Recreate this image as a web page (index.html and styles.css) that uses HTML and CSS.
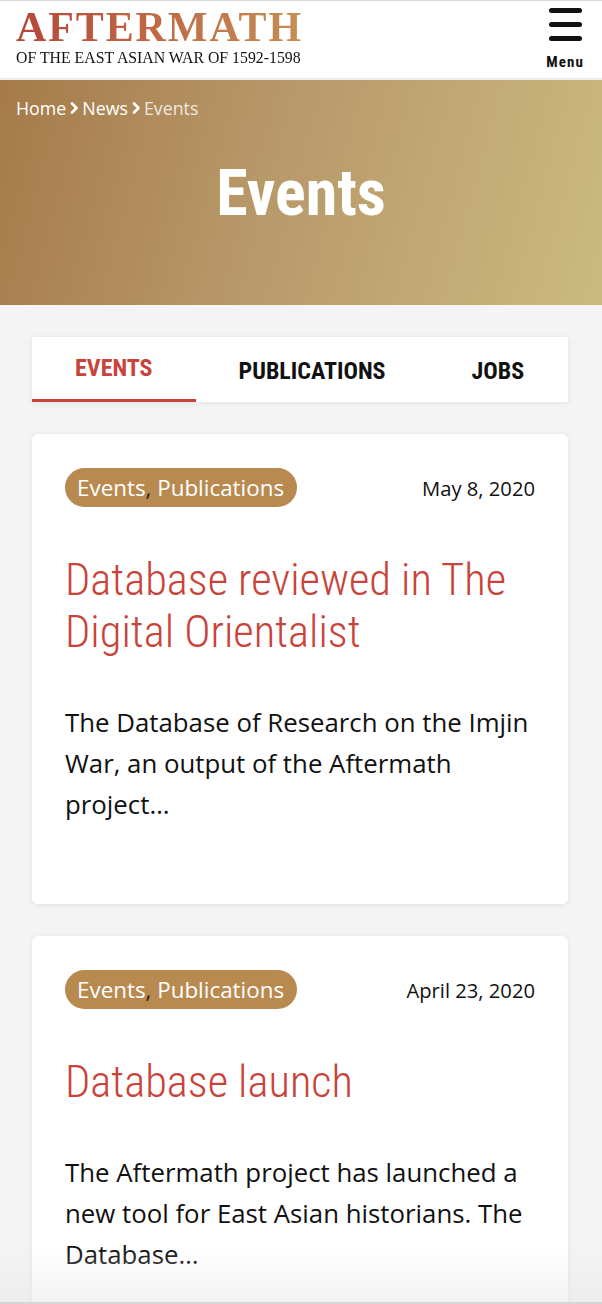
FILE: index.html
```html
<!DOCTYPE html>
<html lang="en">
<head>
<meta charset="utf-8">
<title>Events – Aftermath</title>
<link rel="stylesheet" href="styles.css">
</head>
<body>
<header class="site-header">
  <a class="logo" href="#">
    <span class="logo-title">AFTERMATH</span>
    <span class="logo-sub">OF THE EAST ASIAN WAR OF 1592-1598</span>
  </a>
  <button class="menu-btn" type="button">
    <span class="bars"><i></i><i></i><i></i></span>
    <span class="menu-label">Menu</span>
  </button>
</header>

<section class="hero">
  <nav class="crumbs">
    <a href="#">Home</a>
    <svg class="chev" viewBox="0 0 8 12" width="8" height="12"><path d="M2 1.5 L6.5 6 L2 10.5" fill="none" stroke="#fff" stroke-width="2.6" stroke-linecap="round" stroke-linejoin="round"/></svg>
    <a href="#">News</a>
    <svg class="chev" viewBox="0 0 8 12" width="8" height="12"><path d="M2 1.5 L6.5 6 L2 10.5" fill="none" stroke="#fff" stroke-width="2.6" stroke-linecap="round" stroke-linejoin="round"/></svg>
    <span class="current">Events</span>
  </nav>
  <h1 class="hero-title">Events</h1>
</section>

<main class="content">
  <nav class="tabs">
    <a class="tab active" href="#">EVENTS</a>
    <a class="tab" href="#">PUBLICATIONS</a>
    <a class="tab" href="#">JOBS</a>
  </nav>

  <article class="card">
    <div class="card-meta">
      <span class="pill">Events<span class="comma">,</span> Publications</span>
      <span class="date">May 8, 2020</span>
    </div>
    <h2 class="card-title">Database reviewed in The Digital Orientalist</h2>
    <p class="card-text">The Database of Research on the Imjin War, an output of the Aftermath project…</p>
  </article>

  <article class="card">
    <div class="card-meta">
      <span class="pill">Events<span class="comma">,</span> Publications</span>
      <span class="date">April 23, 2020</span>
    </div>
    <h2 class="card-title">Database launch</h2>
    <p class="card-text">The Aftermath project has launched a new tool for East Asian historians. The Database…</p>
  </article>
</main>
<div class="bottom-fade"></div>
</body>
</html>
```

FILE: styles.css
```css
* { box-sizing: border-box; }
html, body { margin: 0; padding: 0; }
body {
  background: #f4f4f4;
  font-family: "Open Sans", "Noto Sans", sans-serif;
  color: #111;
  overflow: hidden;
}
a { text-decoration: none; color: inherit; }

.site-header {
  height: 80px;
  background: #fff;
  border-top: 1px solid #d8d8d8;
  border-bottom: 2px solid #ececec;
  display: flex;
  justify-content: space-between;
  padding: 5px 18px 0 16px;
}
.logo { display: flex; flex-direction: column; }
.logo-title {
  font-family: "Liberation Serif", "Times New Roman", serif;
  font-weight: bold;
  font-size: 42px;
  line-height: 42px;
  letter-spacing: 1.9px;
  background: linear-gradient(90deg, #b5463a 0%, #bf6a45 50%, #c48f55 100%);
  -webkit-background-clip: text;
  background-clip: text;
  color: transparent;
  width: max-content;
}
.logo-sub {
  font-family: "Liberation Serif", "Times New Roman", serif;
  font-size: 17px;
  line-height: 17px;
  margin-top: 1px;
  color: #111;
  transform: scaleX(0.93);
  transform-origin: left center;
  white-space: nowrap;
  width: max-content;
}
.menu-btn {
  background: none;
  border: 0;
  padding: 0;
  display: flex;
  flex-direction: column;
  align-items: center;
  cursor: pointer;
}
.bars { display: flex; flex-direction: column; gap: 9.5px; padding-top: 2px; }
.bars i { display: block; width: 33px; height: 4.5px; background: #111; border-radius: 3px; }
.menu-label {
  font-family: "Roboto Condensed", "Roboto", sans-serif;
  font-stretch: condensed;
  font-weight: 700;
  font-size: 15px;
  color: #111;
  margin-top: 12px;
  letter-spacing: 1.1px;
}

.hero {
  height: 225px;
  background: linear-gradient(105deg, #a67a4a 0%, #b8996a 45%, #cbba80 100%);
  padding: 16px 16px 0;
}
.crumbs {
  display: flex;
  align-items: center;
  gap: 4px;
  font-size: 17.8px;
  line-height: 24px;
  color: #fff;
}
.crumbs .chev { width: 8px; height: 12px; }
.crumbs .current { color: rgba(255,255,255,0.82); }
.hero-title {
  margin: 42px 0 0;
  text-align: center;
  color: #fff;
  font-family: "Roboto Condensed", "Roboto", sans-serif;
  font-stretch: condensed;
  font-weight: 700;
  font-size: 64px;
  line-height: 64px;
}

.content {
  padding: 32px 34px 0 32px;
  display: flex;
  flex-direction: column;
  gap: 32px;
}
.tabs {
  background: #fff;
  height: 65px;
  display: flex;
  box-shadow: 0 1px 6px rgba(0,0,0,0.08);
}
.tab {
  padding: 6px 43px 0;
  display: flex;
  align-items: center;
  font-family: "Roboto Condensed", "Roboto", sans-serif;
  font-stretch: condensed;
  font-weight: 700;
  font-size: 24px;
  color: #111;
  border-bottom: 3px solid transparent;
}
.tab.active { color: #c9433a; border-bottom-color: #c9433a; padding-top: 2px; padding-bottom: 2px; }

.card {
  background: #fff;
  border-radius: 6px;
  box-shadow: 0 1px 6px rgba(0,0,0,0.08);
  padding: 34px 33px 79px;
}
.card-meta {
  display: flex;
  justify-content: space-between;
  align-items: center;
}
.pill {
  background: #b98a50;
  color: #fff;
  font-size: 22.4px;
  line-height: 39px;
  height: 39px;
  padding: 0 13px 0 12px;
  border-radius: 20px;
}
.pill .comma { color: #222; }
.date { font-size: 20.2px; color: #111; }
.card-title {
  margin: 47px 0 0;
  font-family: "Roboto Condensed", "Roboto", sans-serif;
  font-stretch: condensed;
  font-weight: 300;
  font-size: 44.5px;
  line-height: 52px;
  color: #c9433a;
}
.card-text {
  margin: 44px 0 0;
  font-size: 25.8px;
  line-height: 41px;
  color: #111;
}
.bottom-fade {
  position: fixed;
  left: 0; right: 0; bottom: 0;
  height: 56px;
  background: linear-gradient(rgba(238,238,238,0), rgba(232,232,232,0.55));
  border-bottom: 2px solid #d6d6d6;
  pointer-events: none;
}
```
